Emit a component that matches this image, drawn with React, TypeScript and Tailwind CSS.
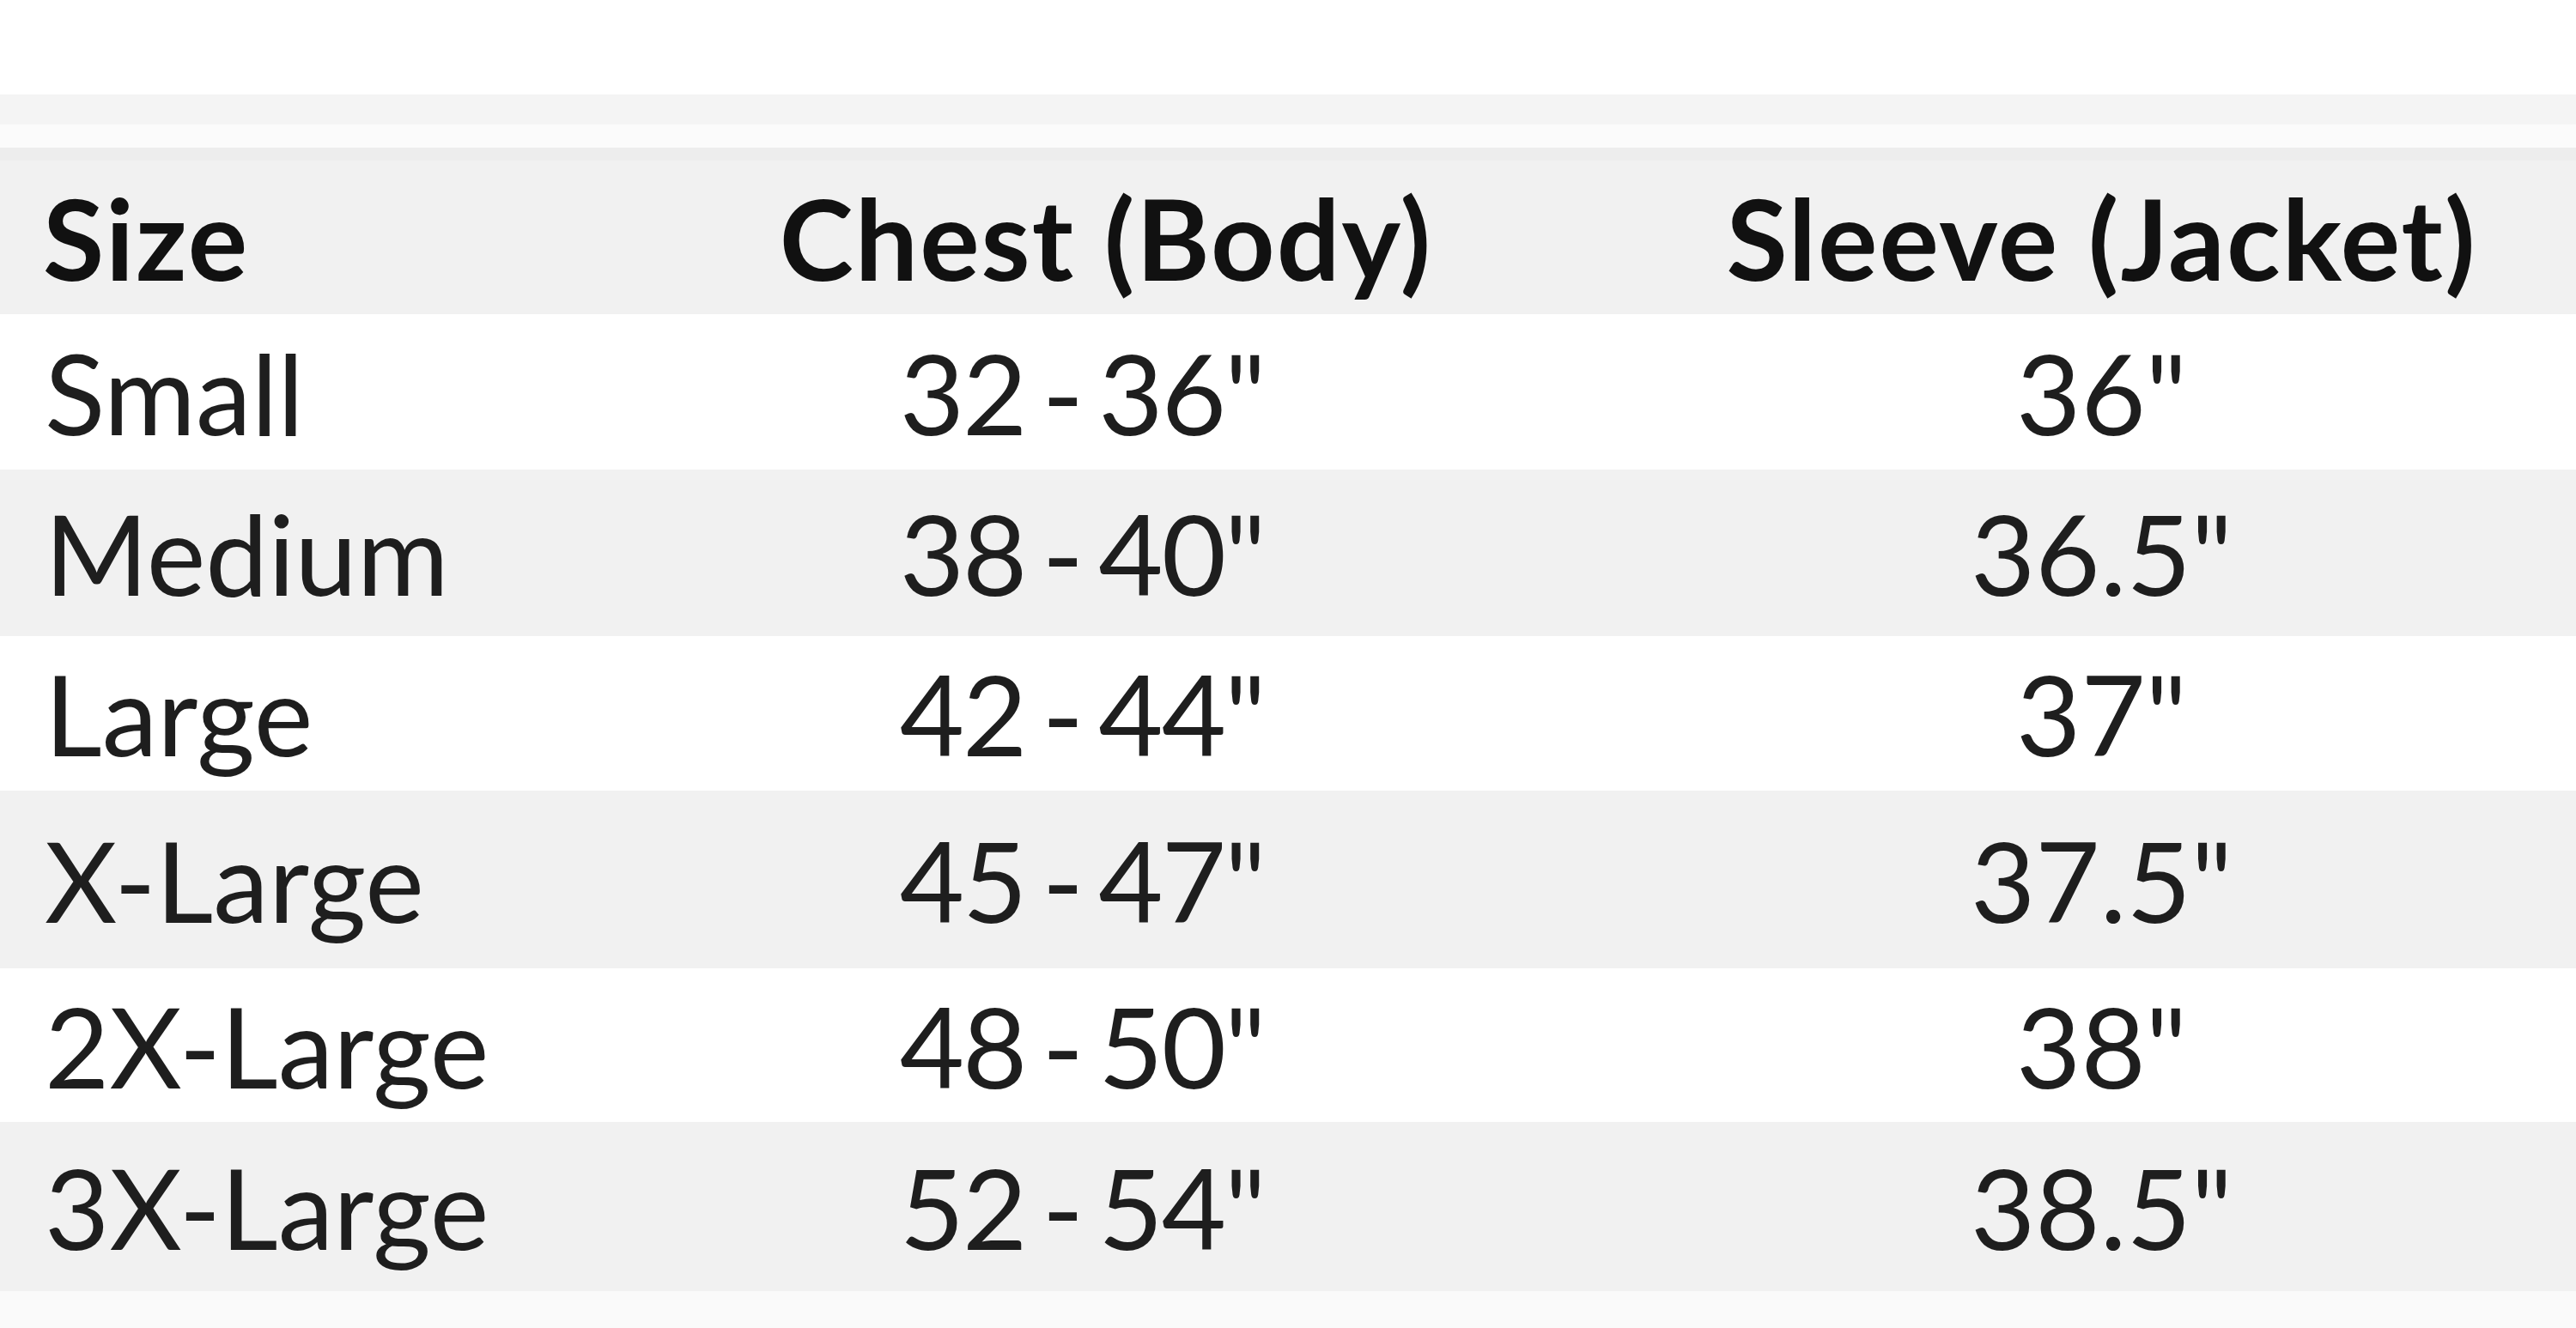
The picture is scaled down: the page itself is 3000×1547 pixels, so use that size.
import React from "react"

// Size chart table — three columns, zebra rows
type Row = { size: string; chest: string; sleeve: string; cls: string }

const ROWS: Row[] = [
  { size: "Small", chest: "32 - 36\"", sleeve: "36\"", cls: "h-[181px] bg-white" },
  { size: "Medium", chest: "38 - 40\"", sleeve: "36.5\"", cls: "h-[194px] bg-[#f1f1f1]" },
  { size: "Large", chest: "42 - 44\"", sleeve: "37\"", cls: "h-[180px] bg-white" },
  { size: "X-Large", chest: "45 - 47\"", sleeve: "37.5\"", cls: "h-[207px] bg-[#f1f1f1]" },
  { size: "2X-Large", chest: "48 - 50\"", sleeve: "38\"", cls: "h-[179px] bg-white" },
  { size: "3X-Large", chest: "52 - 54\"", sleeve: "38.5\"", cls: "h-[197px] bg-[#f1f1f1]" },
]

export default function App() {
  return (
    <div className="flex h-[1547px] w-[3000px] flex-col overflow-hidden bg-white font-['Lato','Open_Sans',sans-serif] text-[130px] leading-[1.2]">
      {/* faint bands above the table */}
      <div className="h-[110px] shrink-0 bg-white" />
      <div className="h-[35px] shrink-0 bg-[#f4f4f4]" />
      <div className="h-[27px] shrink-0 bg-[#fbfbfb]" />
      <div className="h-[15px] shrink-0 bg-[#ededed]" />

      {/* header */}
      <div className="grid h-[179px] shrink-0 grid-cols-[625px_1270px_1fr] items-center bg-[#f1f1f1] font-bold tracking-[2px] text-[#111111]">
        <div className="pl-[50px]">Size</div>
        <div className="pl-[56px] text-center">Chest (Body)</div>
        <div className="text-center">Sleeve (Jacket)</div>
      </div>

      {ROWS.map((r) => (
        <div key={r.size} className={`grid shrink-0 grid-cols-[625px_1270px_1fr] items-center text-[#1e1e1e] ${r.cls}`}>
          <div className="pl-[52px]">{r.size}</div>
          <div className="text-center tracking-[-2px] [word-spacing:-12px]">{r.chest}</div>
          <div className="text-center">{r.sleeve}</div>
        </div>
      ))}

      <div className="flex-1 bg-[#fafafa]" />
    </div>
  )
}
